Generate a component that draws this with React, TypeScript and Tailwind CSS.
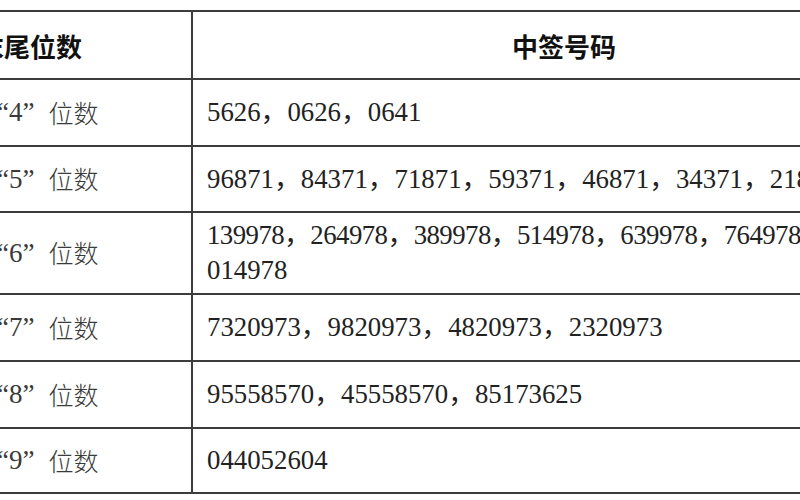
const rows: { digit: string; lines: string[]; h: string; tight?: boolean }[] = [
  { digit: "4", lines: ["5626，0626，0641"], h: "h-[67px]" },
  {
    digit: "5",
    lines: ["96871，84371，71871，59371，46871，34371，21871，09371"],
    h: "h-[66px]",
  },
  {
    digit: "6",
    lines: ["139978，264978，389978，514978，639978，764978，889978，", "014978"],
    h: "h-[82px]",
    tight: true,
  },
  { digit: "7", lines: ["7320973，9820973，4820973，2320973"], h: "h-[67px]" },
  { digit: "8", lines: ["95558570，45558570，85173625"], h: "h-[67px]" },
  { digit: "9", lines: ["044052604"], h: "h-[65px]" },
];

const serif = { fontFamily: '"Liberation Serif", "Noto Sans CJK SC", serif' };

export default function App() {
  return (
    <div className="w-[800px] h-[500px] overflow-hidden bg-white">
      <div className="mt-[10px] ml-[-131px] w-[1066px] border-t-2 border-[#3c3c3c]">
        <div className="flex h-[68px] border-b-2 border-[#3c3c3c]">
          <div className="w-[324px] shrink-0 border-r-2 border-[#3c3c3c] flex items-center justify-center text-[26px] font-bold text-[#111] font-['Noto_Sans_CJK_SC',sans-serif]">
            末尾位数
          </div>
          <div className="w-[742px] flex items-center justify-center text-[26px] font-bold text-[#111] font-['Noto_Sans_CJK_SC',sans-serif]">
            中签号码
          </div>
        </div>

        {rows.map((r) => (
          <div key={r.digit} className={`flex ${r.h} border-b-2 border-[#3c3c3c]`}>
            <div className="w-[324px] shrink-0 border-r-2 border-[#3c3c3c] flex items-center pl-[99px] text-[25px] text-[#3a3a3a] whitespace-nowrap">
              <span className="inline-block w-[27px] font-['Noto_Sans_CJK_SC',sans-serif] font-light">末</span>
              <span className="inline-block w-[14px] text-right text-[27px]" style={serif}>“</span>
              <span className="inline-block text-[27px]" style={serif}>{r.digit}</span>
              <span className="inline-block w-[26px] text-[27px]" style={serif}>”</span>
              <span className="font-['Noto_Sans_CJK_SC',sans-serif] font-light">位数</span>
            </div>
            <div
              className="w-[742px] flex flex-col justify-center pl-[14px] text-[26.8px] leading-[35px] text-[#222] whitespace-nowrap overflow-hidden"
              style={serif}
            >
              {r.lines.map((l, i) => (
                <div key={l} className={r.tight && i === 0 ? "tracking-[-0.55px]" : ""}>
                  {l}
                </div>
              ))}
            </div>
          </div>
        ))}
      </div>
    </div>
  );
}
